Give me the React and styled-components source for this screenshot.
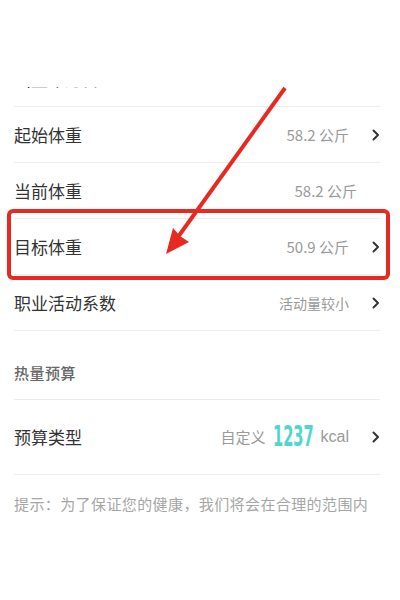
import React from "react";
import styled, { createGlobalStyle } from "styled-components";

const GlobalStyle = createGlobalStyle`
  html, body {
    margin: 0;
    padding: 0;
    background: #ffffff;
  }
  body {
    font-family: "Noto Sans CJK SC", "Noto Sans", sans-serif;
  }
`;

const Screen = styled.div`
  position: relative;
  width: 400px;
  height: 600px;
  overflow: hidden;
  background: #ffffff;
`;

const TopBar = styled.div`
  height: 87px;
`;

const PeekRow = styled.div`
  height: 2px;
  overflow: hidden;
  display: flex;
  align-items: flex-end;
  padding: 0 14px;
  margin-bottom: 17px;
`;

const List = styled.div`
  padding: 0 20px 0 14px;
`;

const Row = styled.div`
  box-sizing: border-box;
  height: ${(p) => p.$height || 56}px;
  border-top: 1px solid #ececec;
  display: flex;
  align-items: center;
  justify-content: space-between;
  padding-top: ${(p) => p.$padTop || 0}px;
`;

const Label = styled.span`
  font-size: 17px;
  line-height: 20px;
  color: #333333;
`;

const SectionTitle = styled.span`
  font-size: 15px;
  line-height: 20px;
  letter-spacing: 0.5px;
  font-weight: 500;
  color: #666666;
`;

const Right = styled.div`
  display: flex;
  align-items: center;
  padding-right: ${(p) => (p.$arrow ? 0 : 23)}px;
`;

const Value = styled.span`
  font-size: ${(p) => p.$size || 15}px;
  line-height: 20px;
  color: #9a9a9a;
`;

const Big = styled.span`
  display: inline-block;
  font-family: "DejaVu Sans Condensed", "DejaVu Sans", sans-serif;
  font-size: 28px;
  line-height: 30px;
  font-weight: 700;
  color: #4fd6cf;
  transform: scaleX(0.58);
  transform-origin: left center;
  margin: 0 -23px 0 8px;
`;

const Unit = styled.span`
  font-family: "Liberation Sans", "Noto Sans", sans-serif;
  font-size: 16px;
  font-weight: 400;
  color: #9a9a9a;
`;

const ChevronBox = styled.span`
  display: flex;
  margin-left: 22px;
  width: 9px;
  justify-content: center;
`;

const Tip = styled.div`
  border-top: 1px solid #ececec;
  padding-top: 19px;
  font-size: 15px;
  line-height: 20px;
  letter-spacing: 0.4px;
  color: #a6a6a6;
  white-space: nowrap;
`;

const Highlight = styled.div`
  position: absolute;
  left: 7px;
  top: 209px;
  width: 383px;
  height: 71px;
  box-sizing: border-box;
  border: 4px solid #e62a22;
  border-radius: 6px;
  pointer-events: none;
`;

const Overlay = styled.svg`
  position: absolute;
  left: 0;
  top: 0;
  pointer-events: none;
`;

const Chevron = () => (
  <ChevronBox>
    <svg width="8" height="12" viewBox="0 0 8 12">
      <path d="M1.5 1.5 L6 6 L1.5 10.5" fill="none" stroke="#333" strokeWidth="2" strokeLinecap="round" strokeLinejoin="round" />
    </svg>
  </ChevronBox>
);

const SettingRow = ({ label, value, arrow = true, size }) => (
  <Row>
    <Label>{label}</Label>
    <Right $arrow={arrow}>
      <Value $size={size}>{value}</Value>
      {arrow && <Chevron />}
    </Right>
  </Row>
);

const App = () => {
  return (
    <>
      <GlobalStyle />
      <Screen>
        <TopBar />
        <PeekRow>
          <Label>出生年月日</Label>
        </PeekRow>
        <List>
          <SettingRow label="起始体重" value="58.2 公斤" />
          <SettingRow label="当前体重" value="58.2 公斤" arrow={false} />
          <SettingRow label="目标体重" value="50.9 公斤" />
          <SettingRow label="职业活动系数" value="活动量较小" size={14} />
          <Row $height={69} $padTop={15}>
            <SectionTitle>热量预算</SectionTitle>
          </Row>
          <Row $height={75}>
            <Label>预算类型</Label>
            <Right $arrow>
              <Value>自定义</Value>
              <Big>1237</Big>
              <Unit>kcal</Unit>
              <Chevron />
            </Right>
          </Row>
          <Tip>提示：为了保证您的健康，我们将会在合理的范围内</Tip>
        </List>
        <Highlight />
        <Overlay width="400" height="600" viewBox="0 0 400 600">
          <line x1="285" y1="88" x2="178" y2="237" stroke="#e62a22" strokeWidth="4" />
          <polygon points="166,254 189,242 180,236 173,228" fill="#e62a22" />
        </Overlay>
      </Screen>
    </>
  );
};

export default App;
